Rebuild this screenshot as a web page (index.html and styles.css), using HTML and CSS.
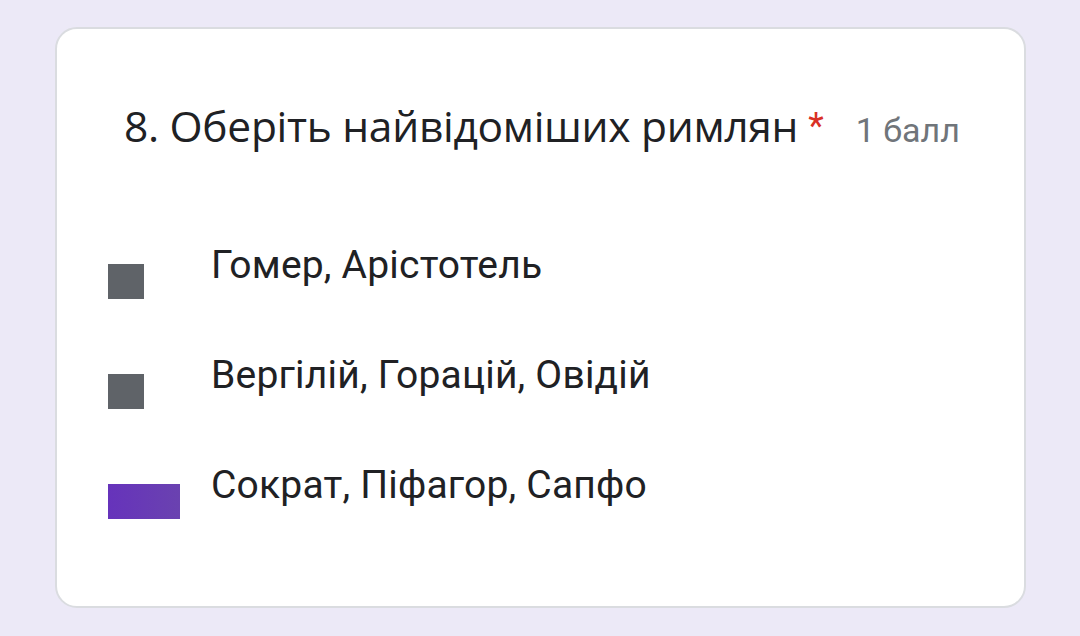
FILE: index.html
```html
<!DOCTYPE html>
<html lang="uk">
<head>
  <meta charset="UTF-8">
  <title>Питання 8</title>
  <link rel="stylesheet" href="styles.css">
</head>
<body>
  <div class="card">
    <div class="question">
      <span class="title">8. Оберіть найвідоміших римлян</span>
      <span class="required">*</span>
      <span class="points">1 балл</span>
    </div>
    <div class="options">
      <div class="option">
        <span class="box-slot"><span class="box"></span></span>
        <span class="label">Гомер, Арістотель</span>
      </div>
      <div class="option">
        <span class="box-slot"><span class="box"></span></span>
        <span class="label">Вергілій, Горацій, Овідій</span>
      </div>
      <div class="option">
        <span class="box-slot"><span class="box box-checked"></span></span>
        <span class="label">Сократ, Піфагор, Сапфо</span>
      </div>
    </div>
  </div>
</body>
</html>
```

FILE: styles.css
```css
html, body {
  margin: 0;
  height: 100%;
}
body {
  background-color: #ece9f7;
  font-family: Roboto, 'Liberation Sans', sans-serif;
  color: #202124;
  padding: 27px 54px 28px 55px;
  box-sizing: border-box;
}
.card {
  background-color: #fff;
  border: 2px solid #dadce0;
  border-radius: 22px;
  height: 100%;
  box-sizing: border-box;
  padding: 68px 60px 0 51px;
}
.question {
  display: flex;
  align-items: baseline;
  padding-left: 16px;
}
.title {
  font-family: 'Open Sans', Roboto, sans-serif;
  font-size: 42.5px;
  letter-spacing: -0.3px;
  color: #202124;
}
.required {
  color: #d93025;
  font-size: 36px;
  margin-left: 10px;
  position: relative;
  top: -4px;
}
.points {
  color: #70757a;
  font-size: 34px;
  margin-left: 32px;
}
.options {
  margin-top: 87px;
  display: flex;
  flex-direction: column;
  gap: 62px;
}
.option {
  display: flex;
  align-items: center;
  height: 48px;
}
.box-slot {
  width: 103px;
  flex-shrink: 0;
  display: flex;
}
.box {
  width: 36px;
  height: 35px;
  background-color: #5f6368;
  margin-top: 32px;
}
.box-checked {
  width: 72px;
  background: linear-gradient(90deg, #6633bb, #6a42b0);
}
.label {
  font-size: 39px;
  letter-spacing: 0.2px;
}
```
